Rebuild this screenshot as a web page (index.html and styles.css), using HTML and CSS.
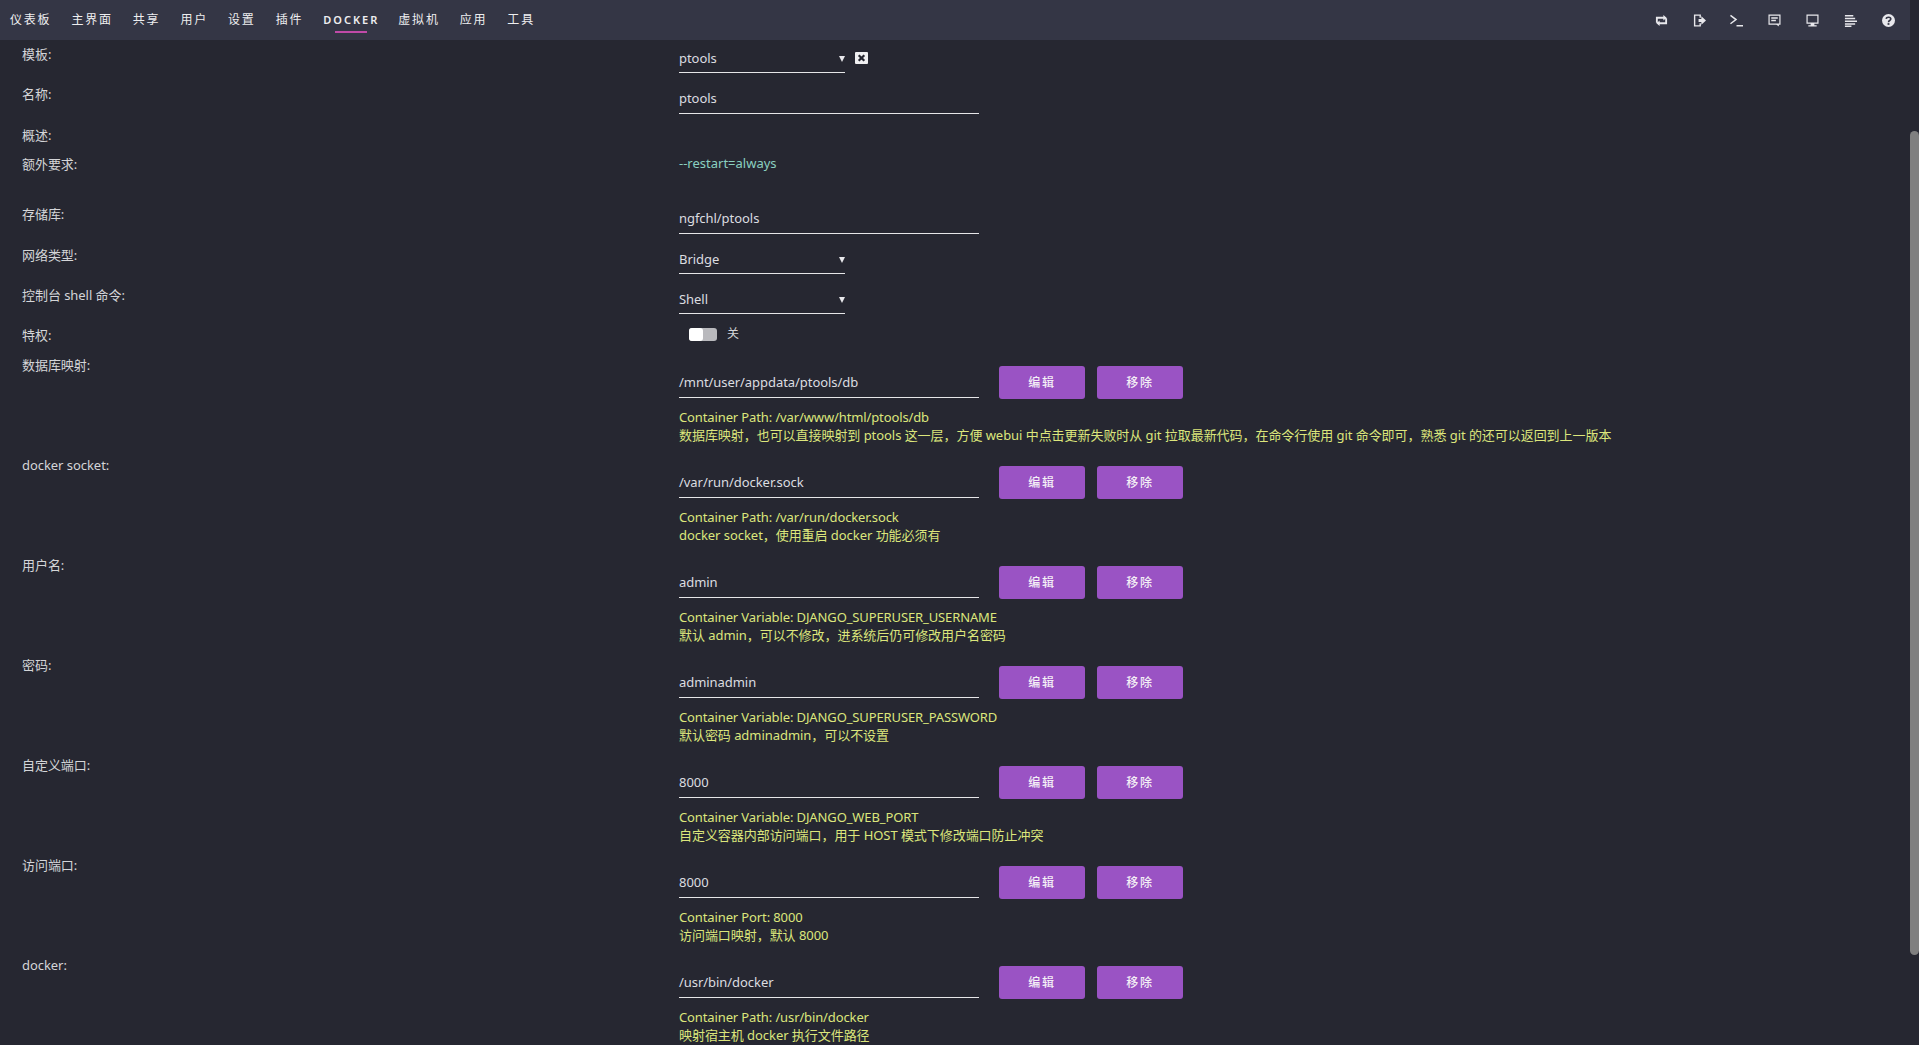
FILE: index.html
```html
<!DOCTYPE html>
<html lang="zh">
<head>
<meta charset="utf-8">
<title>Docker</title>
<link rel="stylesheet" href="styles.css">
</head>
<body>
<div class="page">
<header class="topbar">
  <nav class="nav">
    <a>仪表板</a><a>主界面</a><a>共享</a><a>用户</a><a>设置</a><a>插件</a><a class="active">DOCKER</a><a>虚拟机</a><a>应用</a><a>工具</a>
  </nav>
  <div class="tools">
    <svg viewBox="0 0 14 14"><path d="M1 3h8V1l3.500 3L9 7V5H3v4.500H1zM13 11H5v2L1.500 10 5 7v2h6V4.500h2z" fill="currentColor"/></svg>
    <svg viewBox="0 0 14 14"><path d="M1 .5h7.500V4H7V2H2.500v10H7v-2h1.500v3.500H1zM6 5.500h3V2.500L14 7l-5 4.500v-3H6z" fill="currentColor"/></svg>
    <svg viewBox="0 0 14 14"><path d="M.5 1.500l6 4.500-6 4.500M7 12.700h7" fill="none" stroke="currentColor" stroke-width="1.600"/></svg>
    <svg viewBox="0 0 14 14"><path d="M.5 .5h13v11h-2l.5 2-3-2H.5zM1.800 1.800v8.400h10.400V1.800zM3.500 3.500h7v1.500h-7zM3.500 6.200h5v1.500h-5z" fill="currentColor" fill-rule="evenodd"/></svg>
    <svg viewBox="0 0 14 14"><path d="M.5 .5h13v10H9v1.500h2.500v1.500h-9V12H5v-1.500H.5zM1.800 1.800v7.400h10.400V1.800z" fill="currentColor" fill-rule="evenodd"/></svg>
    <svg viewBox="0 0 14 14"><path d="M1 1h9v1.700H1zM1 4h11v1.700H1zM1 7h13v1.700H1zM1 10h11v1.700H1zM1 12.300h7V14H1z" fill="currentColor"/></svg>
    <svg viewBox="0 0 14 14"><circle cx="7" cy="7" r="7" fill="currentColor"/><path d="M4.500 5.300C4.800 2.800 9.500 2.800 9.500 5.400 9.500 7 7 7 7 8.800" fill="none" stroke="#343645" stroke-width="1.700"/><rect x="6" y="9.800" width="2" height="1.900" fill="#343645"/></svg>
  </div>
</header>
<main class="form">
  <div class="row r-template"><span class="label">模板:</span><div class="value"><div class="select">ptools<i class="caret"></i></div><span class="clear"><svg viewBox="0 0 13 12"><path d="M3.700 3.200l5.600 5.600M9.300 3.200l-5.600 5.600" stroke="#262731" stroke-width="2.200"/></svg></span></div></div>
  <div class="row r-name"><span class="label">名称:</span><div class="value"><div class="input">ptools</div></div></div>
  <div class="row r-desc"><span class="label">概述:</span></div>
  <div class="row r-extra"><span class="label">额外要求:</span><div class="value"><span class="teal">--restart=always</span></div></div>
  <div class="row r-repo"><span class="label">存储库:</span><div class="value"><div class="input">ngfchl/ptools</div></div></div>
  <div class="row r-net"><span class="label">网络类型:</span><div class="value"><div class="select">Bridge<i class="caret"></i></div></div></div>
  <div class="row r-shell"><span class="label">控制台 shell 命令:</span><div class="value"><div class="select">Shell<i class="caret"></i></div></div></div>
  <div class="row r-priv"><span class="label">特权:</span><div class="value"><span class="switch"><i></i></span><span class="off">关</span></div></div>
  <div class="row cfg"><span class="label">数据库映射:</span><div class="stack"><div class="line"><div class="input">/mnt/user/appdata/ptools/db</div><button>编辑</button><button>移除</button></div><p><span class="key">Container Path: /var/www/html/ptools/db</span><br>数据库映射，也可以直接映射到 ptools 这一层，方便 webui 中点击更新失败时从 git 拉取最新代码，在命令行使用 git 命令即可，熟悉 git 的还可以返回到上一版本</p></div></div>
  <div class="row cfg"><span class="label">docker socket:</span><div class="stack"><div class="line"><div class="input">/var/run/docker.sock</div><button>编辑</button><button>移除</button></div><p><span class="key">Container Path: /var/run/docker.sock</span><br>docker socket，使用重启 docker 功能必须有</p></div></div>
  <div class="row cfg"><span class="label">用户名:</span><div class="stack"><div class="line"><div class="input">admin</div><button>编辑</button><button>移除</button></div><p><span class="key">Container Variable: DJANGO_SUPERUSER_USERNAME</span><br>默认 admin，可以不修改，进系统后仍可修改用户名密码</p></div></div>
  <div class="row cfg"><span class="label">密码:</span><div class="stack"><div class="line"><div class="input">adminadmin</div><button>编辑</button><button>移除</button></div><p><span class="key">Container Variable: DJANGO_SUPERUSER_PASSWORD</span><br>默认密码 adminadmin，可以不设置</p></div></div>
  <div class="row cfg"><span class="label">自定义端口:</span><div class="stack"><div class="line"><div class="input">8000</div><button>编辑</button><button>移除</button></div><p><span class="key">Container Variable: DJANGO_WEB_PORT</span><br>自定义容器内部访问端口，用于 HOST 模式下修改端口防止冲突</p></div></div>
  <div class="row cfg"><span class="label">访问端口:</span><div class="stack"><div class="line"><div class="input">8000</div><button>编辑</button><button>移除</button></div><p><span class="key">Container Port: 8000</span><br>访问端口映射，默认 8000</p></div></div>
  <div class="row cfg"><span class="label">docker:</span><div class="stack"><div class="line"><div class="input">/usr/bin/docker</div><button>编辑</button><button>移除</button></div><p><span class="key">Container Path: /usr/bin/docker</span><br>映射宿主机 docker 执行文件路径</p></div></div>
</main>
</div>
<div class="scrollbar"><div class="thumb"></div></div>
</body>
</html>
```
FILE: styles.css
```css
* { box-sizing: border-box; }
html, body { margin: 0; height: 100%; overflow: hidden; background: #262731; }
body { font: 13px/18px "Noto Sans", "Noto Sans CJK SC", sans-serif; color: #dcdde0; letter-spacing: -0.05px; }
.page { width: 1910px; height: 1045px; overflow: hidden; }
.topbar { height: 40px; background: #343645; display: flex; justify-content: space-between; align-items: center; padding: 0 15px 0 10px; }
.nav { display: flex; gap: 20px; font-size: 12px; letter-spacing: 1.800px; color: #eeeef0; }
.nav a { position: relative; line-height: 40px; }
.nav .active { font-size: 11px; font-weight: 600; letter-spacing: 2px; margin-right: -1px; }
.nav .active::after { content: ""; position: absolute; left: 12px; width: 32px; bottom: 7px; height: 2px; background: #c04aa8; }
.tools { display: flex; gap: 24.900px; margin-top: 1px; color: #e8e8ec; }
.tools svg { width: 13px; height: 13px; display: block; }
.form { padding: 3px 0 0 22px; }
.row { display: flex; align-items: flex-start; }
.label { width: 657px; flex: none; color: #d4d5d8; margin-top: 2px; }
.value { display: flex; align-items: center; }
.select, .input { height: 30px; border-bottom: 1px solid #e6e6e8; line-height: 29px; }
.select { width: 166px; position: relative; line-height: 31px; }
.input { width: 300px; flex: none; }
.caret { position: absolute; right: 0; top: 13px; border: 3.500px solid transparent; border-top: 6px solid #e8e8ec; border-bottom: 0; }
.clear { width: 13px; height: 12px; margin-left: 10px; background: #f0f0f2; border-radius: 1px; display: block; }
.clear svg { display: block; width: 13px; height: 12px; }
.teal { color: #8ad0c0; margin-top: -1px; letter-spacing: 0; }
.r-template { height: 41px; }
.r-name { height: 41px; }
.r-name .label { margin-top: 1px; }
.r-desc { height: 30px; }
.r-desc .label { margin-top: 1px; }
.r-extra { height: 49px; }
.r-extra .label { margin-top: 0; }
.r-repo { height: 40px; }
.r-repo .label { margin-top: 1px; }
.r-net { height: 40px; }
.r-shell { height: 40px; }
.r-priv { height: 32px; }
.r-priv .value { padding: 1px 0 0 10px; }
.switch { width: 28px; height: 13px; border-radius: 3px; background: #b9b9bd; position: relative; display: block; }
.switch i { position: absolute; left: 0; top: 0; width: 14px; height: 13px; border-radius: 3px; background: #fff; }
.off { margin-left: 10px; font-size: 12px; color: #d4d5d8; }
.cfg { height: 100px; }
.cfg .label { margin-top: 0; }
.stack { display: flex; flex-direction: column; padding-top: 10px; }
.line { display: flex; align-items: center; height: 33px; }
.line button { width: 86px; height: 33px; margin-left: 12px; border: 0; padding: 0; border-radius: 3px; background: #9a53c4; color: #f4f0f6; font: 500 12px/33px "Noto Sans", "Noto Sans CJK SC", sans-serif; letter-spacing: 1.800px; }
.line .input { margin-right: 8px; }
.stack p { margin: 9px 0 0; color: #dce67c; line-height: 18px; white-space: nowrap; }
.key { letter-spacing: -0.12px; }
.scrollbar { position: fixed; top: 0; right: 0; width: 9px; height: 1045px; background: #262731; }
.thumb { position: absolute; top: 131px; left: 0; width: 9px; height: 824px; border-radius: 5px; background: #808080; }
```
